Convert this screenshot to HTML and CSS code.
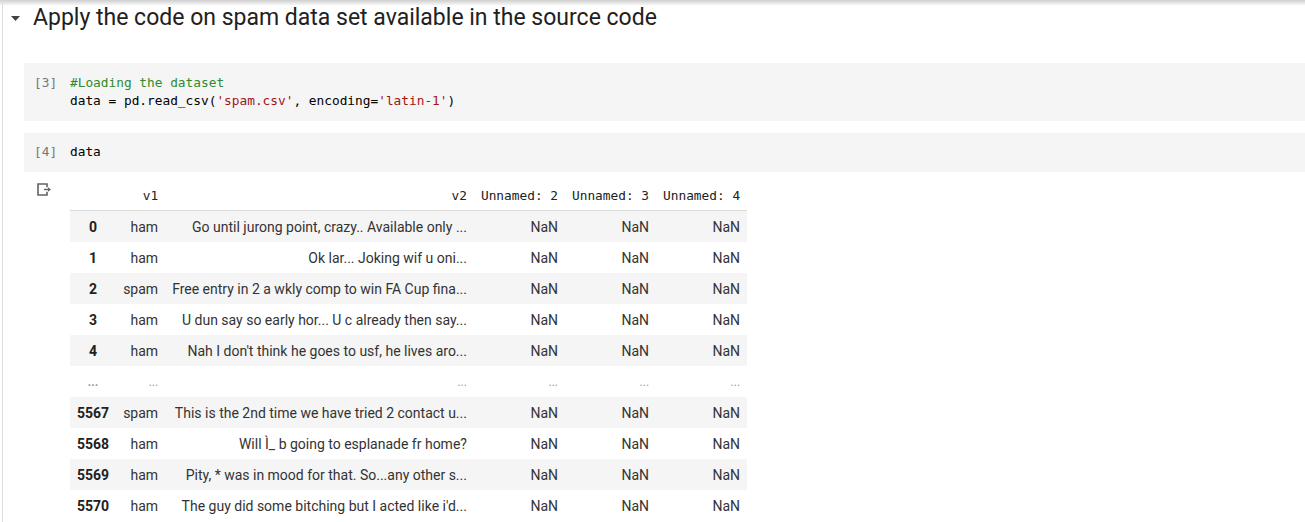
FILE: index.html
```html
<!DOCTYPE html>
<html>
<head>
<meta charset="utf-8">
<link rel="stylesheet" href="styles.css">
</head>
<body>
<div class="notebook">
  <div class="section-head">
    <svg class="caret" width="9" height="5" viewBox="0 0 9 5"><path d="M0 0 H9 L4.5 5 Z" fill="#424242"/></svg>
    <h1 class="title">Apply the code on spam data set available in the source code</h1>
  </div>

  <div class="cell code-cell first">
    <div class="exec">[3]</div>
    <pre class="code"><span class="cm">#Loading the dataset</span>
data = pd.read_csv(<span class="st">'spam.csv'</span>, encoding=<span class="st">'latin-1'</span>)</pre>
  </div>

  <div class="cell code-cell">
    <div class="exec">[4]</div>
    <pre class="code">data</pre>
  </div>

  <div class="output">
    <div class="out-gutter">
      <svg class="out-icon" width="15" height="13" viewBox="0 0 15 13">
        <path d="M10 4.2 V1 H1 V12 H10 V8.8" fill="none" stroke="#5f6368" stroke-width="1.6"/>
        <path d="M7 6.5 H11" stroke="#5f6368" stroke-width="1.4"/>
        <path d="M11 4.3 L14 6.5 L11 8.7 Z" fill="#5f6368"/>
      </svg>
    </div>
    <table class="df">
      <thead>
        <tr><th></th><th>v1</th><th>v2</th><th>Unnamed: 2</th><th>Unnamed: 3</th><th>Unnamed: 4</th></tr>
      </thead>
      <tbody>
        <tr><th>0</th><td>ham</td><td>Go until jurong point, crazy.. Available only ...</td><td>NaN</td><td>NaN</td><td>NaN</td></tr>
        <tr><th>1</th><td>ham</td><td>Ok lar... Joking wif u oni...</td><td>NaN</td><td>NaN</td><td>NaN</td></tr>
        <tr><th>2</th><td>spam</td><td>Free entry in 2 a wkly comp to win FA Cup fina...</td><td>NaN</td><td>NaN</td><td>NaN</td></tr>
        <tr><th>3</th><td>ham</td><td>U dun say so early hor... U c already then say...</td><td>NaN</td><td>NaN</td><td>NaN</td></tr>
        <tr><th>4</th><td>ham</td><td>Nah I don't think he goes to usf, he lives aro...</td><td>NaN</td><td>NaN</td><td>NaN</td></tr>
        <tr class="dots"><th>...</th><td>...</td><td>...</td><td>...</td><td>...</td><td>...</td></tr>
        <tr><th>5567</th><td>spam</td><td>This is the 2nd time we have tried 2 contact u...</td><td>NaN</td><td>NaN</td><td>NaN</td></tr>
        <tr><th>5568</th><td>ham</td><td>Will Ì_ b going to esplanade fr home?</td><td>NaN</td><td>NaN</td><td>NaN</td></tr>
        <tr><th>5569</th><td>ham</td><td>Pity, * was in mood for that. So...any other s...</td><td>NaN</td><td>NaN</td><td>NaN</td></tr>
        <tr><th>5570</th><td>ham</td><td>The guy did some bitching but I acted like i'd...</td><td>NaN</td><td>NaN</td><td>NaN</td></tr>
      </tbody>
    </table>
  </div>
</div>
</body>
</html>
```
FILE: styles.css
```css
html, body {
  margin: 0;
  padding: 0;
}
body {
  background: #fff linear-gradient(#cfcfcf, #ffffff 6px) no-repeat top left / 100% 6px;
  font-family: Roboto, "Liberation Sans", sans-serif;
  color: #212121;
  overflow: hidden;
}
.notebook {
  margin-left: 2px;
  border-left: 1px solid #dedede;
  min-height: 522px;
}
.section-head {
  display: flex;
  align-items: center;
  height: 36px;
}
.caret {
  margin-left: 8px;
  margin-right: 13px;
}
.title {
  margin: 0;
  font-size: 23px;
  font-weight: 400;
  line-height: 36px;
  color: #212121;
  white-space: nowrap;
}
.cell {
  margin-left: 21px;
}
.code-cell {
  display: flex;
  background: #f5f5f5;
  padding: 10px 0 11px 0;
  margin-top: 12px;
}
.code-cell.first {
  margin-top: 27px;
  padding-top: 11px;
  padding-bottom: 11px;
}
.exec {
  width: 46px;
  box-sizing: border-box;
  padding-left: 10px;
  font-family: "DejaVu Sans Mono", monospace;
  font-size: 12.8px;
  line-height: 18px;
  color: #757575;
}
.code {
  margin: 0;
  font-family: "DejaVu Sans Mono", monospace;
  font-size: 12.8px;
  line-height: 18px;
  color: #000;
}
.cm { color: #2e8b2e; }
.st { color: #a31515; }
.output {
  display: flex;
  margin-left: 21px;
  margin-top: 8px;
}
.out-gutter {
  width: 46px;
  padding-left: 13px;
  padding-top: 3px;
  box-sizing: border-box;
}
.out-icon { display: block; }
.df {
  border-collapse: collapse;
  font-size: 14px;
  white-space: nowrap;
}
.df thead th {
  font-family: "DejaVu Sans Mono", monospace;
  font-size: 12.8px;
  font-weight: 400;
  text-align: right;
  height: 30px;
  padding: 0 7px;
  border-bottom: 1px solid #dcdcdc;
  color: #212121;
}
.df tbody th, .df tbody td {
  height: 31px;
  padding: 0 7px;
  text-align: right;
  color: #333;
}
.df tbody th {
  font-weight: 700;
  text-align: center;
  color: #212121;
}
.df tbody tr:nth-child(odd) {
  background: #f5f5f5;
}
.df tbody tr.dots {
  background: #fff;
}
.df tbody tr.dots th, .df tbody tr.dots td {
  color: #999;
  font-size: 12px;
}
```
